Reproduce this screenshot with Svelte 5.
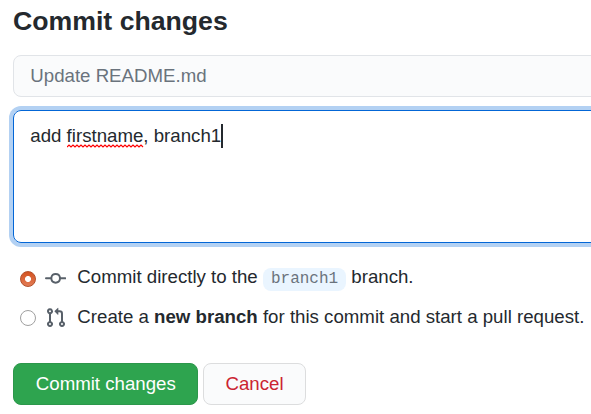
<script>
  let message = $state('direct');
</script>

<main>
  <h3>Commit changes</h3>
  <div class="field summary">Update README.md</div>
  <div class="field description">
    <span class="line">add <span class="misspelled">firstname<svg class="wave" width="77" height="4" viewBox="0 0 77 4"><path d="M0 3 {Array.from({ length: 19 }, (_, i) => `L${i * 4 + 2} 1 L${i * 4 + 4} 3`).join(' ')}" /></svg></span>, branch1<i class="caret"></i></span>
  </div>
  <div class="choices">
    <label>
      <input type="radio" name="target" value="direct" bind:group={message} />
      <svg class="icon" viewBox="0 0 16 16"><path fill-rule="evenodd" d="M10.5 7.75a2.5 2.5 0 11-5 0 2.5 2.5 0 015 0zm1.43.75a4.002 4.002 0 01-7.86 0H.75a.75.75 0 110-1.5h3.32a4.001 4.001 0 017.86 0h3.32a.75.75 0 110 1.5h-3.32z" /></svg>
      <span>Commit directly to the <code>branch1</code> branch.</span>
    </label>
    <label class="alternate">
      <input type="radio" name="target" value="new" bind:group={message} />
      <svg class="icon" viewBox="0 0 16 16"><path fill-rule="evenodd" d="M7.177 3.073L9.573.677A.25.25 0 0110 .854v4.792a.25.25 0 01-.427.177L7.177 3.427a.25.25 0 010-.354zM3.75 2.5a.75.75 0 100 1.5.75.75 0 000-1.5zm-2.25.75a2.25 2.25 0 113 2.122v5.256a2.251 2.251 0 11-1.5 0V5.372A2.25 2.25 0 011.5 3.25zM11 2.5h-1V4h1a1 1 0 011 1v5.628a2.251 2.251 0 101.5 0V5A2.5 2.5 0 0011 2.5zm1 10.25a.75.75 0 111.5 0 .75.75 0 01-1.5 0zM3.75 12a.75.75 0 100 1.5.75.75 0 000-1.5z" /></svg>
      <span>Create a <b>new branch</b> for this commit and start a pull request.</span>
    </label>
  </div>
  <div class="actions">
    <button class="primary">Commit changes</button>
    <button class="cancel">Cancel</button>
  </div>
</main>

<style>
  :global(body) {
    background: #fff;
    overflow: hidden;
  }
  main {
    box-sizing: border-box;
    width: 591px;
    height: 414px;
    padding: 1px 0 0 13px;
    overflow: hidden;
    font: 18.667px/28px 'Liberation Sans', Arial, sans-serif;
    color: #24292e;
    white-space: nowrap;
  }
  h3 {
    margin: 0 0 14px;
    font-size: 26.667px;
    line-height: 40px;
    font-weight: 700;
  }
  .field {
    box-sizing: border-box;
    width: 620px;
    border: 1px solid #e1e4e8;
    border-radius: 8px;
    padding: 0 17px;
  }
  .summary {
    height: 42px;
    line-height: 40px;
    padding-left: 16.3px;
    background: #fafbfc;
    color: #6a737d;
  }
  .description {
    height: 133px;
    margin-top: 13px;
    padding: 11px 16.3px;
    border-color: #0366d6;
    box-shadow: 0 0 0 4px #b3d1f3;
  }
  .line,
  .misspelled {
    position: relative;
  }
  .wave {
    position: absolute;
    left: 0;
    bottom: -2px;
    fill: none;
    stroke: #f00;
    stroke-width: 1.2;
  }
  .caret {
    position: absolute;
    right: -2px;
    top: -1px;
    width: 2px;
    height: 24px;
    background: #24292e;
  }
  .choices {
    display: flex;
    flex-direction: column;
    gap: 12px;
    padding: 20px 0 0 7px;
  }
  label {
    display: flex;
    height: 28px;
  }
  input {
    appearance: none;
    box-sizing: border-box;
    flex: none;
    width: 16px;
    height: 16px;
    margin: 8px 9px 0 0;
    border: 1px solid #a0a0a0;
    border-radius: 50%;
    background: #fff;
  }
  input:checked {
    border-color: #b3502b;
    background: radial-gradient(circle, #fff 0 2.6px, transparent 3.4px), linear-gradient(#d4521f, #e27c56);
  }
  .icon {
    flex: none;
    width: 21.333px;
    height: 21.333px;
    margin: 5px 11px 0 0;
    fill: #586069;
  }
  .alternate input {
    margin-top: 7px;
  }
  .alternate .icon {
    margin-top: 4px;
  }
  code {
    display: inline-block;
    padding: 0 8px;
    border-radius: 8px;
    background: #eaf5ff;
    font: 16px/23px 'Liberation Mono', monospace;
    color: #6a737d;
  }
  .actions {
    display: flex;
    gap: 5px;
    margin-top: 32px;
  }
  button {
    box-sizing: border-box;
    height: 42px;
    padding: 0;
    border: 1px solid #2c974b;
    border-radius: 8px;
    font: 18.667px/40px 'Liberation Sans', Arial, sans-serif;
  }
  .primary {
    width: 185px;
    padding-left: 0.6px;
    background: #2ea44f;
    color: #fff;
  }
  .cancel {
    width: 103px;
    border-color: #dcddde;
    background: #fafbfc;
    color: #cb2431;
  }
</style>
